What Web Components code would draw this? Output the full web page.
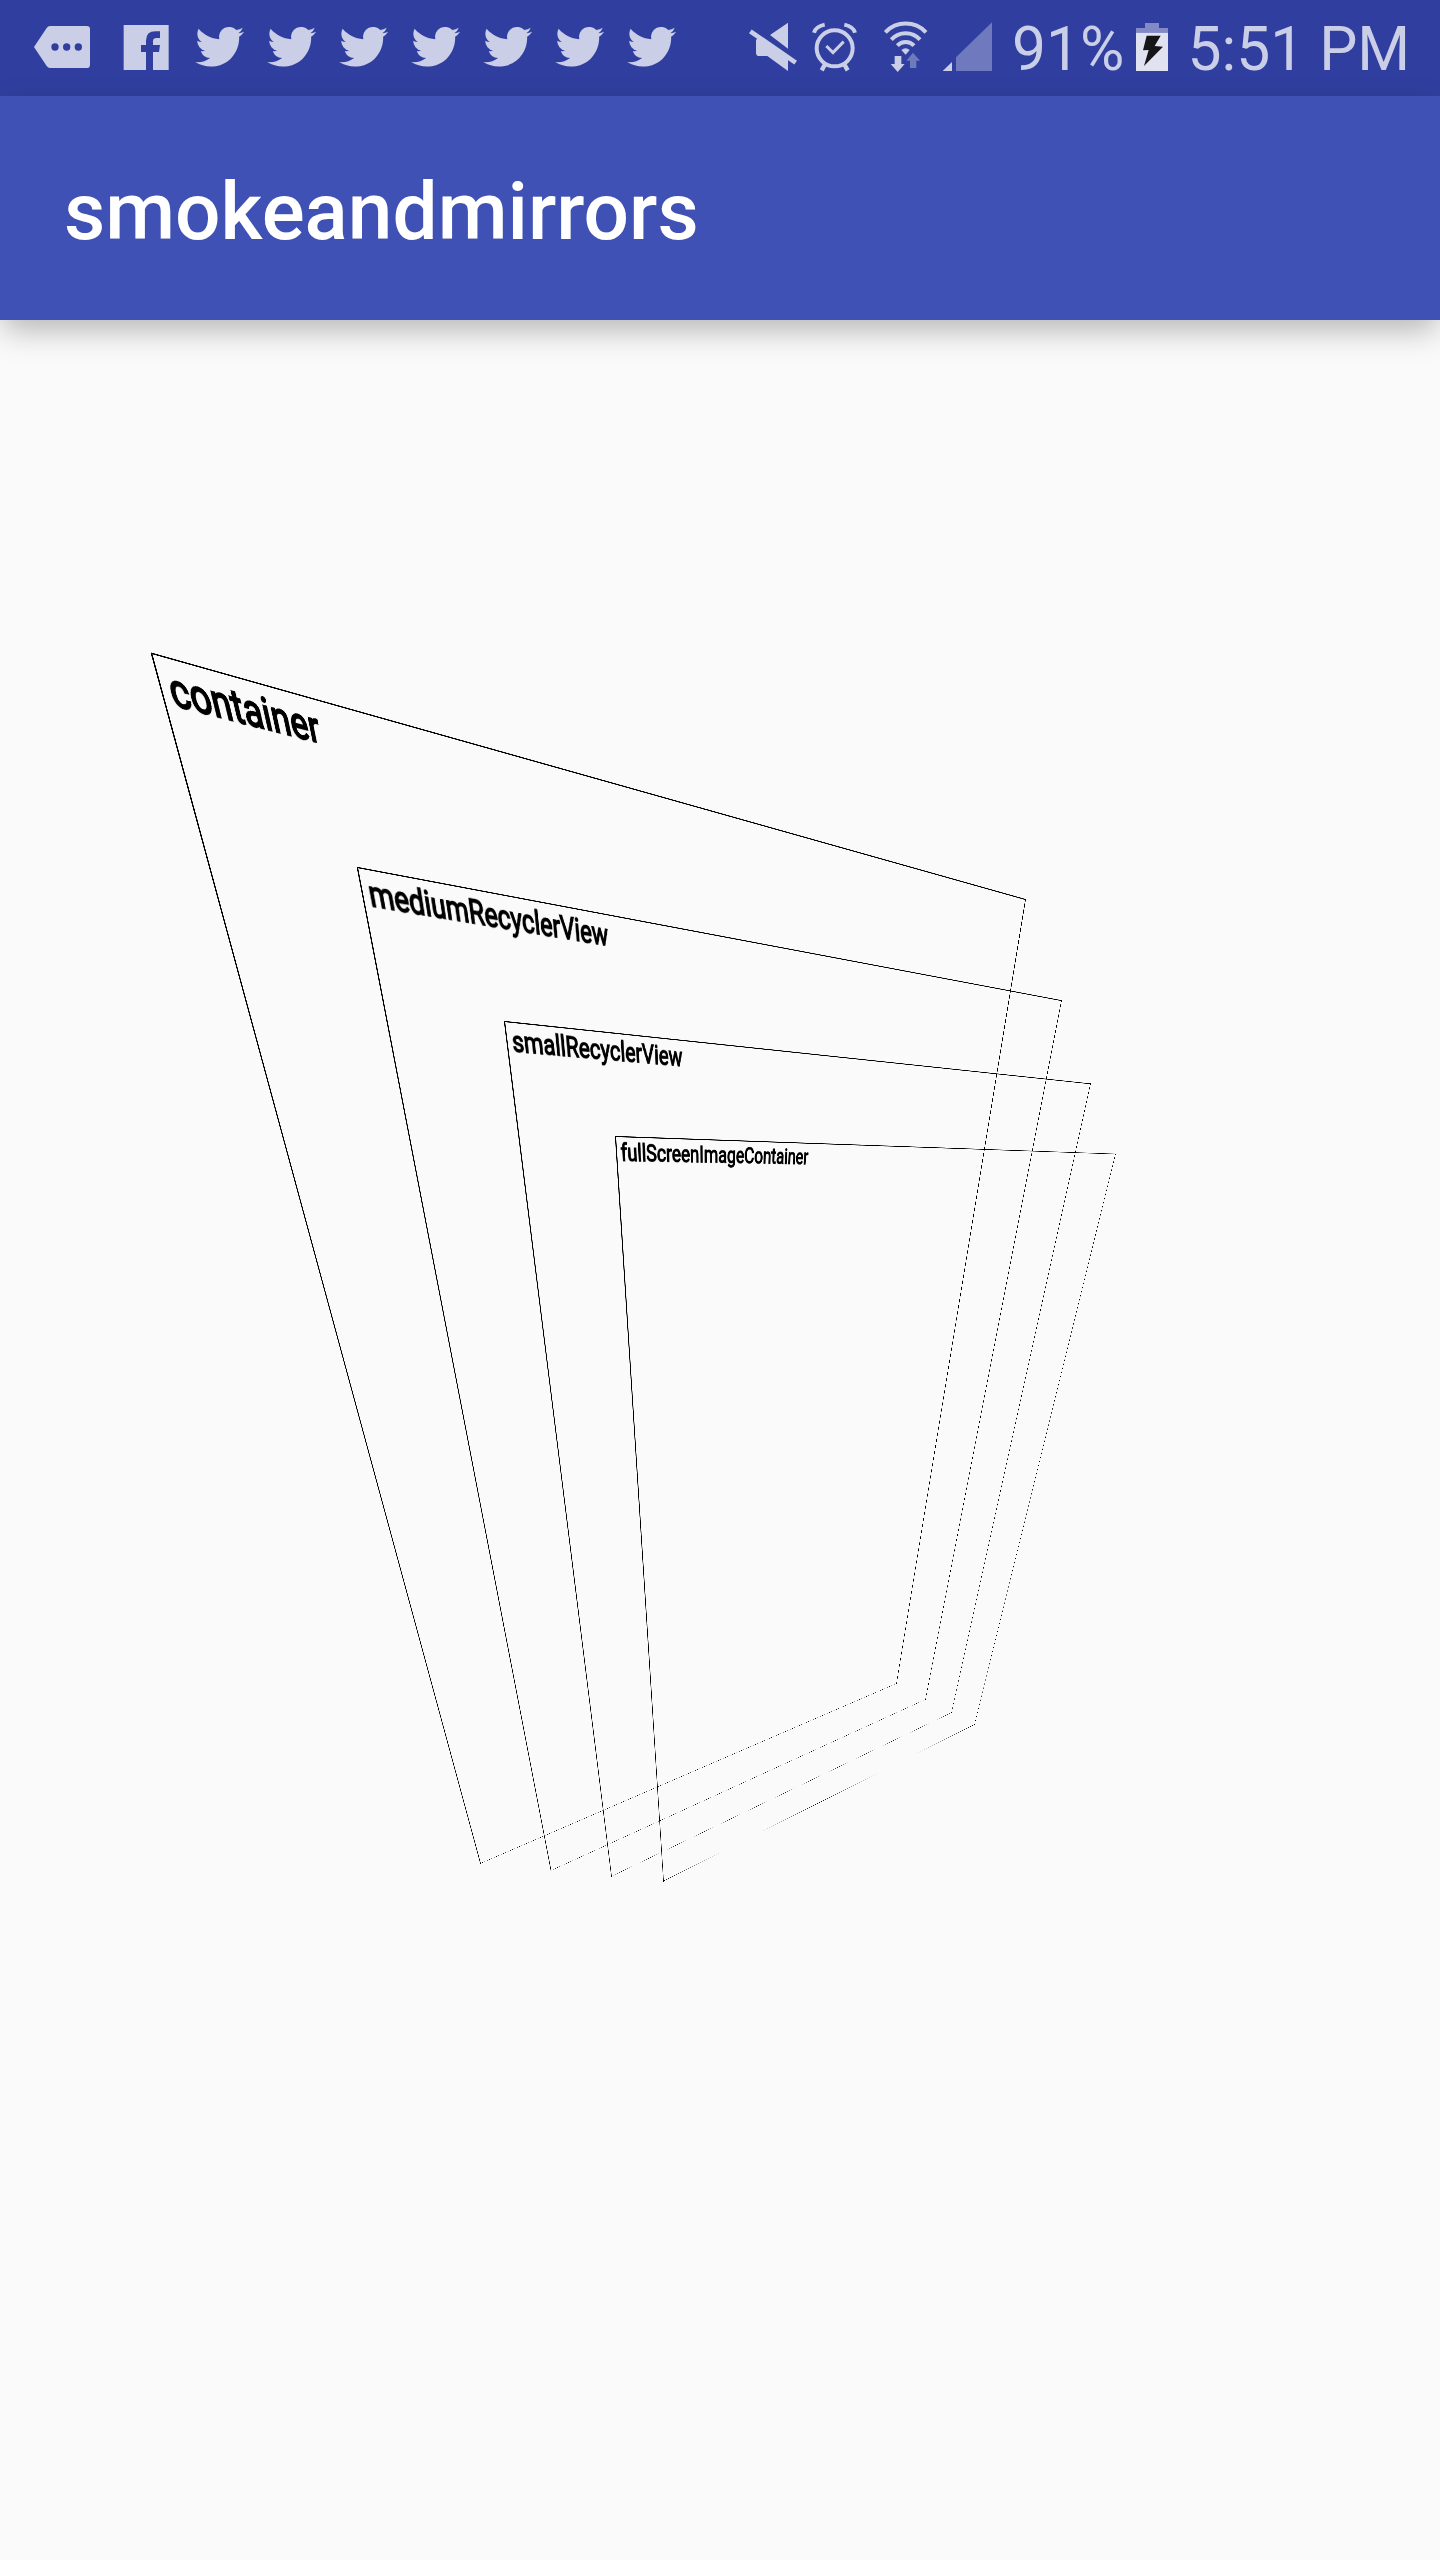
<!DOCTYPE html>
<html lang="en">
<head>
<meta charset="utf-8">
<title>smokeandmirrors</title>
<style>
html,body{margin:0;padding:0;background:#fafafa;font-family:Roboto,"Noto Sans",sans-serif}
</style>
</head>
<body>
<phone-screen></phone-screen>
<script>
const ICONS = {
  more: { box: '0 0 324 288', w: 108, body: '<path fill-rule="evenodd" d="M102 141 L140 84Q144 78 150 78H260Q270 78 270 88V194Q270 204 260 204H150Q144 204 140 198ZM154 141a11 11 0 1 0 22 0a11 11 0 1 0-22 0M189 141a11 11 0 1 0 22 0a11 11 0 1 0-22 0M224 141a11 11 0 1 0 22 0a11 11 0 1 0-22 0"/>' },
  facebook: { box: '324 0 216 288', w: 72, body: '<path d="M371 75H506V210H459V156H477L480 135H459V124Q459 114 470 114H480V94H466Q438 94 438 122V135H423V156H438V210H371Z"/>' },
  bird: { box: '540 0 216 288', w: 72, body: '<path transform="translate(586 67) scale(6.1)" d="M23.953 4.57a10 10 0 01-2.825.775 4.958 4.958 0 002.163-2.723c-.951.555-2.005.959-3.127 1.184a4.92 4.92 0 00-8.384 4.482C7.69 8.095 4.067 6.13 1.64 3.162a4.822 4.822 0 00-.666 2.475c0 1.71.87 3.213 2.188 4.096a4.904 4.904 0 01-2.228-.616v.06a4.923 4.923 0 003.946 4.827 4.996 4.996 0 01-2.212.085 4.936 4.936 0 004.604 3.417 9.867 9.867 0 01-6.102 2.105c-.39 0-.779-.023-1.17-.067a13.995 13.995 0 007.557 2.209c9.053 0 13.998-7.496 13.998-13.985 0-.21 0-.42-.015-.63A9.935 9.935 0 0024 4.59z"/>' },
  mute: { box: '60 0 198 288', w: 66, body: '<path d="M150 105L204 68V146ZM108 120L116 112L204 172V213L142 168H118Q108 168 108 158Z"/><path class="s" stroke-width="14" d="M91 94L227 188"/>' },
  alarm: { box: '258 0 198 288', w: 66, body: '<circle class="s" stroke-width="12" cx="344" cy="145" r="54"/><g class="s" stroke-width="12"><path d="M282 98Q287 80 314 74M405 98Q400 80 373 74"/><path stroke-width="13" d="M315 193L305 211M373 193L383 211"/><path stroke-width="9" d="M319 138L339 158L371 125"/></g>' },
  wifi: { box: '456 0 198 288', w: 66, body: '<g class="s" stroke-width="12"><path d="M496 97A84 84 0 0 1 618 97"/><path d="M514 119A58 58 0 0 1 600 119"/><path d="M532 137A34 34 0 0 1 582 137"/></g><path d="M544 150Q557 140 569 150L557 164ZM524 168H544V192H554L533 216L512 192H524Z"/><path fill="#6f79bd" d="M579 158L600 182H589V204H570V182H559Z"/>' },
  signal: { box: '654 0 180 288', w: 60, body: '<path d="M668 213L696 186V213Z"/><path fill="#6f79bd" d="M708 213V172L816 67V213Z"/>' },
  battery: { box: '150 0 132 288', w: 44, body: '<path fill="#8289c4" d="M195 69H237V84H264V98H168V84H195Z"/><path fill="#e0e2f1" d="M168 98H264V213H168Z"/><path fill="#151515" d="M200 107H242L224 138L249 140L192 198L206 150L189 151Z"/>' }
};

class StatusIcon extends HTMLElement {
  connectedCallback() {
    const i = ICONS[this.getAttribute('name')];
    this.attachShadow({ mode: 'open' }).innerHTML =
      `<style>:host{display:block;flex:none;height:96px;width:${i.w}px}svg{display:block;fill:#cacee7}.s{fill:none;stroke:#cacee7}</style>
       <svg width="${i.w}" height="96" viewBox="${i.box}">${i.body}</svg>`;
  }
}
customElements.define('status-icon', StatusIcon);

class StatusBar extends HTMLElement {
  connectedCallback() {
    this.attachShadow({ mode: 'open' }).innerHTML = `
      <style>
        :host{display:flex;justify-content:space-between;height:96px;background:#303f9f;color:#cacee7;font-size:60.5px;line-height:70px;white-space:nowrap}
        div{display:flex;align-items:flex-start}
        span{display:block;box-sizing:border-box;padding-top:15px;height:96px}
        .pct{width:132px;padding-left:14px}
        .time{width:266px;padding-left:13.5px}
        .right{width:700px}
      </style>
      <div><status-icon name="more"></status-icon><status-icon name="facebook"></status-icon>${'<status-icon name="bird"></status-icon>'.repeat(7)}</div>
      <div class="right"><status-icon name="mute"></status-icon><status-icon name="alarm"></status-icon><status-icon name="wifi"></status-icon><status-icon name="signal"></status-icon><span class="pct">91%</span><status-icon name="battery"></status-icon><span class="time">5:51 PM</span></div>`;
  }
}
customElements.define('status-bar', StatusBar);

class AppBar extends HTMLElement {
  connectedCallback() {
    this.attachShadow({ mode: 'open' }).innerHTML = `
      <style>
        :host{display:flex;align-items:center;box-sizing:border-box;height:224px;padding:7px 64px 0;background:#3f51b5;color:#fff;position:relative;z-index:1;box-shadow:0 12px 30px -3px rgba(0,0,0,.29)}
        h1{margin:0;font-size:80.2px;font-weight:500;line-height:94px}
      </style><h1><slot></slot></h1>`;
  }
}
customElements.define('app-bar', AppBar);

// Solves the projective map from a w x h rectangle onto the quad tl, tr, br, bl.
function quadMatrix(w, h, [[x0, y0], [x1, y1], [x2, y2], [x3, y3]]) {
  const dx1 = x1 - x2, dx2 = x3 - x2, sx = x0 - x1 + x2 - x3;
  const dy1 = y1 - y2, dy2 = y3 - y2, sy = y0 - y1 + y2 - y3;
  const den = dx1 * dy2 - dx2 * dy1;
  const g = (sx * dy2 - dx2 * sy) / den, k = (dx1 * sy - sx * dy1) / den;
  const a = x1 - x0 + g * x1, b = x3 - x0 + k * x3;
  const d = y1 - y0 + g * y1, e = y3 - y0 + k * y3;
  return `matrix3d(${[a / w, d / w, 0, g / w, b / h, e / h, 0, k / h, 0, 0, 1, 0, x0, y0, 0, 1].map(v => v.toFixed(10)).join(',')})`;
}

class LayerLabel extends HTMLElement {
  connectedCallback() {
    this.attachShadow({ mode: 'open' }).innerHTML = `
      <style>
        :host{position:absolute;left:0;top:0;transform-origin:0 0;white-space:nowrap;color:#000;font-size:40px;line-height:47px;padding:3px 0 0 8px}
        span{display:block;transform:scaleX(.89);transform-origin:0 0;-webkit-text-stroke:1.6px #000;text-shadow:-1px 1px 1px rgba(0,0,0,.35)}
      </style><span><slot></slot></span>`;
    this.style.transform = quadMatrix(1440, 2240, JSON.parse(this.getAttribute('quad')));
  }
}
customElements.define('layer-label', LayerLabel);

// Corners run tl, tr, br, bl; each edge has a half width at its start and end.
const LAYERS = [
  { name: 'container', q: [[151.5, 653.3], [1025.5, 899.5], [896.5, 1683.5], [480.5, 1863.4]], w: [[.95, .76], [.42, .28], [.22, .24], [.55, 1]] },
  { name: 'mediumRecyclerView', q: [[357.4, 867.5], [1061.5, 1000.6], [925.5, 1699.4], [551, 1870.5]], w: [[.87, .66], [.36, .25], [.2, .22], [.52, .9]] },
  { name: 'smallRecyclerView', q: [[504.5, 1021.5], [1090.5, 1083.8], [951.5, 1712.6], [611.5, 1876.3]], w: [[.83, .6], [.31, .22], [.19, .2], [.5, .84]] },
  { name: 'fullScreenImageContainer', q: [[615.5, 1136.5], [1115.5, 1154], [974.5, 1724.5], [663.5, 1881]], w: [[.8, .5], [.27, .2], [.19, .19], [.48, .8]] }
];
const SOFTNESS = [.42, .16, .19, .42];

// Samples each hairline at pixel centres and groups the pixels by coverage.
function hairlines() {
  const buckets = Array.from({ length: 13 }, () => '');
  for (const { q, w } of LAYERS) q.forEach((p, i) => {
    const n = q[(i + 1) % 4], [wa, wb] = w[i];
    const steep = Math.abs(n[1] - p[1]) > Math.abs(n[0] - p[0]);
    const [ua, va, ub, vb] = steep ? [p[1], p[0], n[1], n[0]] : [p[0], p[1], n[0], n[1]];
    for (let u = Math.floor(Math.min(ua, ub)); u <= Math.floor(Math.max(ua, ub)); u++) {
      const t = Math.max(0, Math.min(1, (u + .5 - ua) / (ub - ua)));
      const c = va + (vb - va) * (u + .5 - ua) / (ub - ua), half = wa + (wb - wa) * t;
      for (let v = Math.floor(c) - 1; v <= Math.floor(c) + 1; v++) {
        const k = Math.round(12 * Math.min(1, (half - Math.abs(v + .5 - c)) / SOFTNESS[i]));
        if (k > 0) buckets[k] += `M${steep ? v : u} ${steep ? u : v}h1v1h-1z`;
      }
    }
  });
  return buckets.map((d, k) => d && `<path fill-opacity="${(k / 12).toFixed(3)}" d="${d}"/>`).join('');
}

class LayerStage extends HTMLElement {
  connectedCallback() {
    this.attachShadow({ mode: 'open' }).innerHTML = `
      <style>:host{display:block;position:relative;height:2240px;overflow:hidden}
      .plane{position:absolute;left:0;top:-320px;width:1440px;height:2560px}svg{display:block}</style>
      <div class="plane"><svg width="1440" height="2560" shape-rendering="crispEdges">${hairlines()}</svg>
      ${LAYERS.map(l => `<layer-label quad="${JSON.stringify(l.q)}">${l.name}</layer-label>`).join('')}</div>`;
  }
}
customElements.define('layer-stage', LayerStage);

class PhoneScreen extends HTMLElement {
  connectedCallback() {
    this.attachShadow({ mode: 'open' }).innerHTML = `
      <style>:host{display:flex;flex-direction:column;width:1440px;height:2560px;overflow:hidden;background:#fafafa}</style>
      <status-bar></status-bar><app-bar>smokeandmirrors</app-bar><layer-stage></layer-stage>`;
  }
}
customElements.define('phone-screen', PhoneScreen);
</script>
</body>
</html>
